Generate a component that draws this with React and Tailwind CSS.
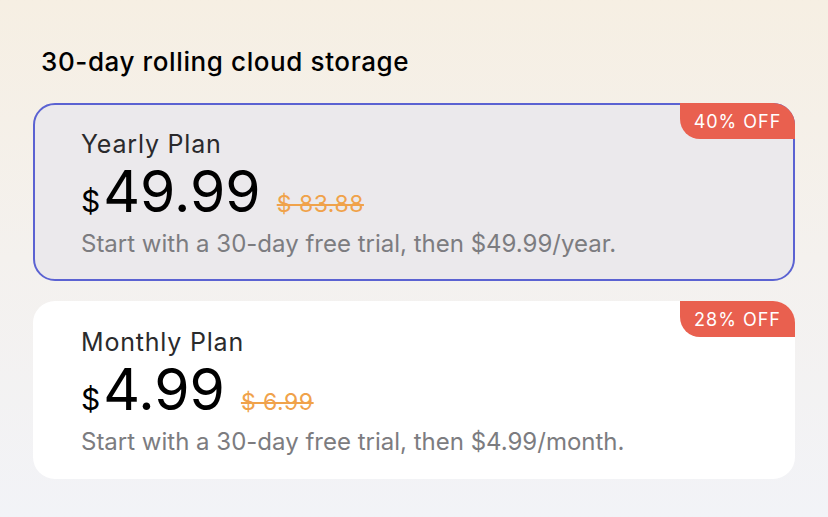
import React from "react";

const plans = [
  {
    name: "Yearly Plan",
    price: "49.99",
    original: "$ 83.88",
    badge: "40% OFF",
    note: "Start with a 30-day free trial, then $49.99/year.",
    selected: true,
  },
  {
    name: "Monthly Plan",
    price: "4.99",
    original: "$ 6.99",
    badge: "28% OFF",
    note: "Start with a 30-day free trial, then $4.99/month.",
    selected: false,
  },
];

const PlanCard = ({ plan }) => (
  <div
    className={
      plan.selected
        ? "relative rounded-[22px] border-2 border-[#5b62d2] bg-[#ebe9ec] pl-[46px] pt-[23px] pb-[21px]"
        : "relative rounded-[22px] border-2 border-transparent bg-white pl-[46px] pt-[23px] pb-[21px]"
    }
  >
    {/* badge */}
    <div className="absolute -top-[2px] -right-[2px] flex h-[36px] w-[115px] items-center justify-center rounded-tr-[22px] rounded-bl-[20px] bg-[#e9604f] text-[18px] tracking-[1px] text-white">
      {plan.badge}
    </div>

    <div className="text-[25px] leading-[32px] tracking-[0.8px] text-[#2a2a2c]">{plan.name}</div>

    <div className="mt-[3px] flex h-[57px] items-baseline leading-none">
      <span className="mr-[3px] text-[30px] text-black">$</span>
      <span className="text-[57px] text-black">{plan.price}</span>
      <span className="ml-[16px] text-[23px] tracking-[0.5px] text-[#f0a24a] line-through decoration-[2px]">
        {plan.original}
      </span>
    </div>

    <div className="mt-[10px] text-[24px] leading-[28px] text-[#7c7c80]">{plan.note}</div>
  </div>
);

export default function App() {
  return (
    <div
      className="h-[517px] w-[828px] overflow-hidden bg-gradient-to-b from-[#f6efe3] via-[#f4f1ee] to-[#f2f3f7] px-[33px] pt-[44px]"
      style={{ fontFamily: "Inter, 'Noto Sans', sans-serif" }}
    >
      <h1 className="ml-[8px] text-[26px] font-medium leading-[36px] tracking-[0.6px] text-black">
        30-day rolling cloud storage
      </h1>
      <div className="mt-[23px] flex flex-col gap-[20px]">
        {plans.map((p) => (
          <PlanCard key={p.name} plan={p} />
        ))}
      </div>
    </div>
  );
}
